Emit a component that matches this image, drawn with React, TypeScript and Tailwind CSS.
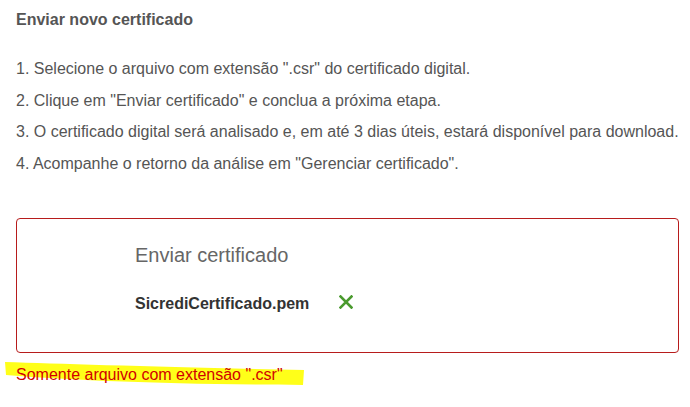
export default function App() {
  return (
    <div className="h-[407px] w-[690px] bg-white pl-4 font-['Liberation_Sans',Arial,sans-serif]">
      <h2 className="pt-[10px] text-[16px] leading-5 font-bold text-[#555]">Enviar novo certificado</h2>
      <ol className="mt-[23px] text-[16px] leading-[31.7px] text-[#555]">
        <li>1. Selecione o arquivo com extensão ".csr" do certificado digital.</li>
        <li>2. Clique em "Enviar certificado" e conclua a próxima etapa.</li>
        <li>3. O certificado digital será analisado e, em até 3 dias úteis, estará disponível para download.</li>
        <li>4. Acompanhe o retorno da análise em "Gerenciar certificado".</li>
      </ol>
      <div className="mt-[38px] h-[135px] w-[663px] rounded-[4px] border border-[#b71c1c] pl-[118px]">
        <div className="pt-[24px] text-[20px] leading-6 text-[#666]">Enviar certificado</div>
        <div className="mt-[27px] flex items-center gap-[30px]">
          <span className="text-[16px] leading-5 font-bold text-[#333]">SicrediCertificado.pem</span>
          <svg width="14" height="14" viewBox="0 0 14 14" className="mb-[4px]">
            <path d="M1.5 1.5 L12.5 12.5 M12.5 1.5 L1.5 12.5" stroke="#4a9a2e" strokeWidth="2.6" strokeLinecap="square" />
          </svg>
        </div>
      </div>
      <div className="relative mt-[10px] w-fit">
        <svg className="absolute -left-[12px] -top-[7px]" width="310" height="34" viewBox="0 0 310 34">
          <path d="M1 6 C60 8 160 11 300 14 L299 29 C160 28 80 25 2 19 Z" fill="#ffff00" opacity="0.9" />
        </svg>
        <span className="relative text-[16px] leading-5 text-[#d10000]">Somente arquivo com extensão ".csr"</span>
      </div>
    </div>
  );
}
